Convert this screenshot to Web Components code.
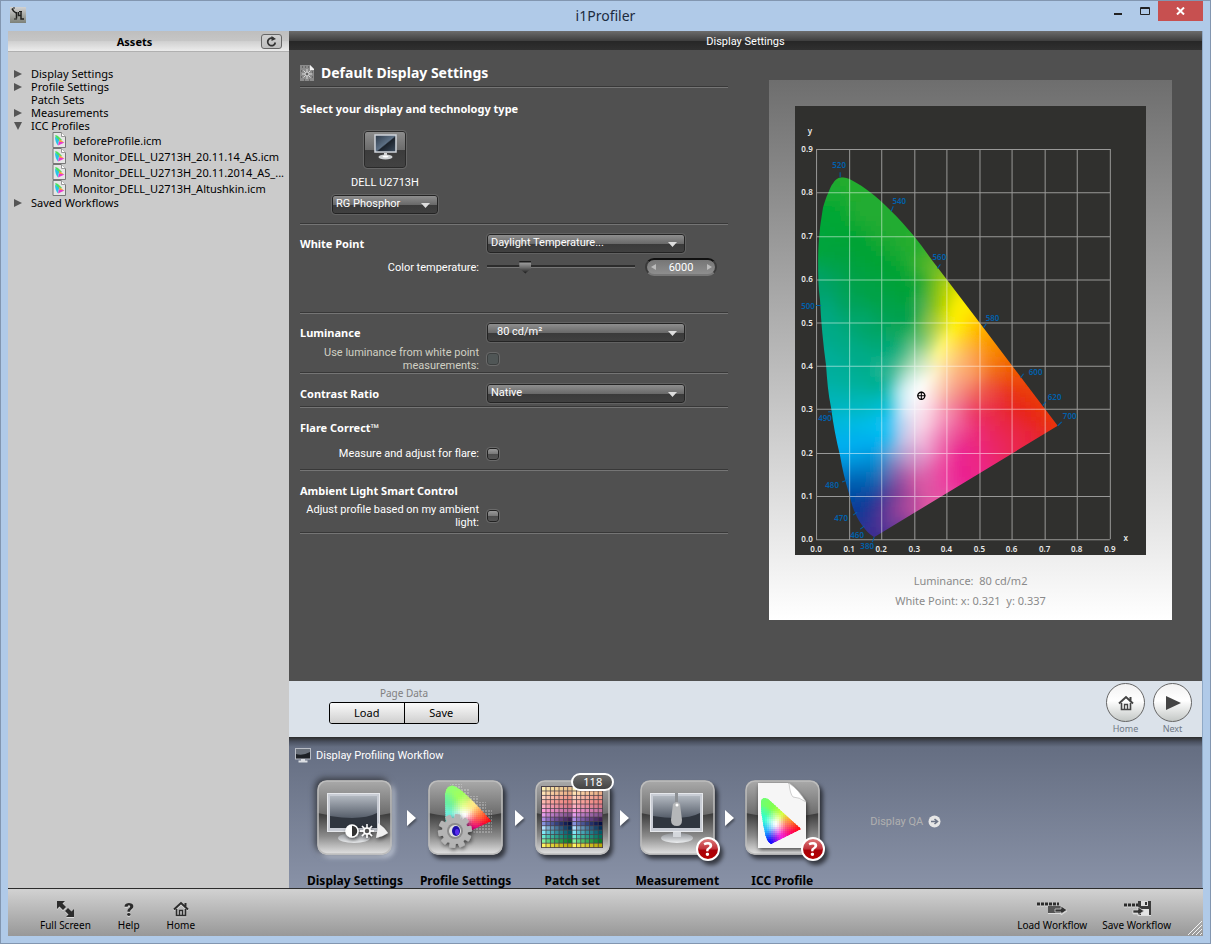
<!DOCTYPE html>
<html lang="en">
<head>
<meta charset="utf-8">
<meta name="viewport" content="width=device-width, initial-scale=1">
<title>i1Profiler</title>
<style>
  body {
    --narrow: Roboto, "Liberation Sans", sans-serif;
    --wide: "Noto Sans", "Open Sans", sans-serif;
    margin: 0;
    font-family: var(--wide);
    font-size: 11px;
    line-height: 13px;
    color: #000;
  }
</style>
</head>
<body>
<profiler-window caption="i1Profiler">
  <assets-panel slot="side">
    <asset-group label="Display Settings" state="closed"></asset-group>
    <asset-group label="Profile Settings" state="closed"></asset-group>
    <asset-group label="Patch Sets"></asset-group>
    <asset-group label="Measurements" state="closed"></asset-group>
    <asset-group label="ICC Profiles" state="open">
      <profile-file>beforeProfile.icm</profile-file>
      <profile-file>Monitor_DELL_U2713H_20.11.14_AS.icm</profile-file>
      <profile-file>Monitor_DELL_U2713H_20.11.2014_AS_...</profile-file>
      <profile-file>Monitor_DELL_U2713H_Altushkin.icm</profile-file>
    </asset-group>
    <asset-group label="Saved Workflows" state="closed"></asset-group>
  </assets-panel>

  <settings-page heading="Display Settings">
    <display-form slot="form"></display-form>
    <gamut-card slot="preview">
      <span slot="luminance">Luminance:&nbsp; 80 cd/m2</span>
      <span slot="white-point">White Point: x: 0.321&nbsp; y: 0.337</span>
    </gamut-card>
  </settings-page>
  <page-data-bar></page-data-bar>
  <workflow-strip heading="Display Profiling Workflow">
    <workflow-step icon="display" selected>Display Settings</workflow-step>
    <workflow-step icon="profile">Profile Settings</workflow-step>
    <workflow-step icon="patches" badge="118">Patch set</workflow-step>
    <workflow-step icon="measure" pending>Measurement</workflow-step>
    <workflow-step icon="icc" pending last>ICC Profile</workflow-step>
  </workflow-strip>

  <app-footer slot="footer">
    <tool-button icon="full">Full Screen</tool-button>
    <tool-button icon="help">Help</tool-button>
    <tool-button icon="home">Home</tool-button>
    <tool-button slot="end" icon="load">Load Workflow</tool-button>
    <tool-button slot="end" icon="save">Save Workflow</tool-button>
  </app-footer>
</profiler-window>

<script>
const toRgb = (hex) => [1, 3, 5].map((i) => parseInt(hex.slice(i, i + 2), 16));

// Colour at (x, y): a plane fitted through the nearby samples, channel by channel.
function colorAt(points, x, y, spread) {
  const ridge = spread * spread * 0.2;
  let total = 0, mx = 0, my = 0;
  const mean = [0, 0, 0];
  const weights = points.map((p) => {
    const w = Math.exp(-((p.x - x) ** 2 + (p.y - y) ** 2) / (2 * spread * spread)) + 1e-9;
    total += w;
    mx += w * p.x;
    my += w * p.y;
    p.rgb.forEach((c, i) => { mean[i] += w * c; });
    return w;
  });
  mx /= total;
  my /= total;
  let sxx = ridge, sxy = 0, syy = ridge;
  points.forEach((p, k) => {
    const w = weights[k] / total;
    sxx += w * (p.x - mx) ** 2;
    syy += w * (p.y - my) ** 2;
    sxy += w * (p.x - mx) * (p.y - my);
  });
  const det = sxx * syy - sxy * sxy;
  return mean.map((sum, i) => {
    const m = sum / total;
    let cx = 0, cy = 0;
    points.forEach((p, k) => {
      const w = weights[k] / total;
      cx += w * (p.x - mx) * (p.rgb[i] - m);
      cy += w * (p.y - my) * (p.rgb[i] - m);
    });
    const gx = (cx * syy - cy * sxy) / det;
    const gy = (cy * sxx - cx * sxy) / det;
    return Math.round(Math.min(255, Math.max(0, m + gx * (x - mx) + gy * (y - my))));
  });
}

// Fills a box with small cells coloured from the samples.
function colorMesh(samples, [x0, y0, x1, y1], cell, spread) {
  const points = samples.map(([x, y, hex]) => ({ x, y, rgb: toRgb(hex) }));
  let out = "";
  for (let y = y0; y < y1; y += cell) {
    for (let x = x0; x < x1; x += cell) {
      const rgb = colorAt(points, x + cell / 2, y + cell / 2, spread).join(",");
      out += `<rect x="${x}" y="${y}" width="${cell + 1}" height="${cell + 1}" fill="rgb(${rgb})"/>`;
    }
  }
  return out;
}

const HOUSE = `
  <path d="M2 9.500 L9 3 L16 9.500 M13.500 3 V6.500" fill="none" stroke="currentColor" stroke-width="2"/>
  <path d="M4.500 9 V15.500 H13.500 V9" fill="none" stroke="currentColor" stroke-width="1.600"/>
  <path d="M7.500 15 V10.500 H10.500 V15" fill="none" stroke="currentColor" stroke-width="1.300"/>`;

class ProfilerWindow extends HTMLElement {
  constructor() {
    super();
    this.attachShadow({ mode: "open" });
  }

  connectedCallback() {
    this.shadowRoot.innerHTML = `
      <style>
        :host {
          display: flex;
          flex-direction: column;
          box-sizing: border-box;
          min-height: 100vh;
          padding: 0 7px 7px;
          background: #b0cae8;
          border: 1px solid #8296b0;
        }
        header {
          display: grid;
          grid-template-columns: 1fr auto 1fr;
          height: 30px;
        }
        .logo { margin: 6px 0 0 2px; }
        h1 {
          margin: 0;
          font-size: 14px;
          font-weight: 400;
          line-height: 30px;
          color: #1c2b3f;
        }
        .buttons { display: flex; justify-content: flex-end; align-items: flex-start; }
        .buttons button {
          width: 27px;
          height: 20px;
          padding: 0;
          border: 0;
          background: none;
        }
        .buttons .close { width: 45px; background: #c75050; }
        .buttons svg { display: block; margin: auto; }
        .body {
          flex: 1;
          display: grid;
          grid-template-columns: 281px minmax(0, 1fr);
          border-right: 1px solid #8fa9c6;
        }
        .main { display: flex; flex-direction: column; }
      </style>
      <header>
        <svg class="logo" width="16" height="16" viewBox="0 0 16 16" aria-hidden="true">
          <defs><linearGradient id="g" x2="0" y2="1"><stop stop-color="#d2d2d2"/><stop offset="1" stop-color="#7c8078"/></linearGradient></defs>
          <rect width="16" height="16" fill="url(#g)"/>
          <path d="M2 1.500L3.500 4L6 6M6.500 5V11.500M8.500 5V8.500H11M11 4V12H14" stroke="#20211f" stroke-width="1.500" fill="none"/>
          <path d="M3 1H5M9 4.500H12M4 12H7" stroke="#20211f" fill="none"/>
        </svg>
        <h1>${this.getAttribute("caption")}</h1>
        <div class="buttons">
          <button aria-label="Minimize"><svg width="8" height="10" viewBox="0 0 8 10"><path d="M0 7h8v2H0z" fill="#222"/></svg></button>
          <button aria-label="Maximize"><svg width="10" height="8" viewBox="0 0 10 8"><path d="M.500 .500h9v7h-9zM0 1.500h10" fill="none" stroke="#222"/></svg></button>
          <button class="close" aria-label="Close"><svg width="9" height="8" viewBox="0 0 9 8"><path d="M1 .500L8 7.500M8 .500L1 7.500" stroke="#fff" stroke-width="2"/></svg></button>
        </div>
      </header>
      <div class="body">
        <slot name="side"></slot>
        <div class="main"><slot></slot></div>
      </div>
      <slot name="footer"></slot>
    `;
  }
}

class AssetsPanel extends HTMLElement {
  constructor() {
    super();
    this.attachShadow({ mode: "open" }).innerHTML = `
      <style>
        :host { display: block; background: #cbcbcb; }
        .bar {
          display: grid;
          grid-template-columns: 1fr auto 1fr;
          align-items: center;
          height: 20px;
          background: linear-gradient(#bebebe, #c6c6c6 48%, #d0d0d0 52%, #ececec);
          border-bottom: 1px solid #b0b0b0;
        }
        h2 { grid-column: 2; margin: 0 0 0 -28px; font-size: 11px; }
        button {
          justify-self: end;
          width: 21px;
          height: 15px;
          margin-right: 7px;
          padding: 0;
          border: 1px solid #666;
          border-radius: 3px;
          background: linear-gradient(#d0d0d0, #c0c0c0);
        }
        svg { display: block; margin: auto; }
        nav { padding-top: 15px; }
      </style>
      <div class="bar">
        <h2>Assets</h2>
        <button aria-label="Refresh">
          <svg width="11" height="11" viewBox="0 0 11 11"><path d="M8 3 A3.800 3.800 0 1 0 9.300 6.500" fill="none" stroke="#333" stroke-width="1.700"/><path d="M5.500 0 L10 3 L5.500 5z" fill="#333"/></svg>
        </button>
      </div>
      <nav><slot></slot></nav>
    `;
  }
}

class AssetGroup extends HTMLElement {
  constructor() {
    super();
    this.attachShadow({ mode: "open" });
  }

  connectedCallback() {
    const arrows = {
      closed: '<path d="M0 0 L8 4 L0 8z"/>',
      open: '<path d="M0 0 H8 L4 8z"/>',
    };
    this.shadowRoot.innerHTML = `
      <style>
        :host { display: block; }
        .row { display: flex; align-items: center; height: 13px; padding-left: 6px; }
        svg { width: 8px; height: 8px; margin-right: 9px; fill: #555; overflow: visible; }
        .files { display: flex; flex-direction: column; padding-left: 44px; }
      </style>
      <div class="row"><svg viewBox="0 0 8 8" aria-hidden="true">${arrows[this.getAttribute("state")] ?? ""}</svg>${this.getAttribute("label")}</div>
      <div class="files"><slot></slot></div>
    `;
  }
}

class ProfileFile extends HTMLElement {
  constructor() {
    super();
    this.attachShadow({ mode: "open" }).innerHTML = `
      <style>
        :host { display: flex; align-items: center; gap: 6px; height: 16px; white-space: nowrap; }
      </style>
      <svg width="15" height="16" viewBox="0 0 15 16" aria-hidden="true">
        <path d="M1 .500H9.500L13.500 4.500V15.500H1z" fill="#e6e6e6" stroke="#777"/>
        <path d="M9.500 .500V4.500H13.500" fill="#fff" stroke="#999"/>
        <path d="M3 3.500 Q5 2 10 8 L6 9z" fill="#4be060"/>
        <path d="M3 4.500 L7 8 L6 13.500 Q3 10 3 4.500" fill="#27c4e6"/>
        <path d="M7 6.500 L12 10.500 L7.500 11z" fill="#f4a33c"/>
        <path d="M7 9.500 L12.500 10.500 L6 13.500z" fill="#e838d0"/>
      </svg>
      <span><slot></slot></span>
    `;
  }
}

class SettingsPage extends HTMLElement {
  constructor() {
    super();
    this.attachShadow({ mode: "open" });
  }

  connectedCallback() {
    this.shadowRoot.innerHTML = `
      <style>
        :host { flex: 1; display: flex; flex-direction: column; background: #505050; color: #fff; }
        h2 {
          margin: 0;
          height: 19px;
          line-height: 22px;
          font-family: var(--narrow);
          font-size: 11px;
          font-weight: 400;
          text-align: center;
          background: linear-gradient(#6c6c6c, #404040 50%, #262626 51%, #303030);
        }
        .columns {
          display: grid;
          grid-template-columns: 17fr 16fr;
          align-items: start;
          gap: 41px;
          padding: 0 30px 0 11px;
        }
        .preview { padding-top: 30px; }
      </style>
      <h2>${this.getAttribute("heading")}</h2>
      <div class="columns">
        <slot name="form"></slot>
        <div class="preview"><slot name="preview"></slot></div>
      </div>
    `;
  }
}

class DisplayForm extends HTMLElement {
  constructor() {
    super();
    this.attachShadow({ mode: "open" }).innerHTML = `
      <style>
        :host { display: block; font-family: var(--narrow); }
        h3 {
          display: flex;
          align-items: center;
          gap: 6px;
          margin: 0;
          padding-top: 9px;
          height: 27px;
          font-family: var(--wide);
          font-size: 14px;
        }
        h4, .name {
          margin: 0;
          font-family: var(--wide);
          font-size: 11px;
          font-weight: 700;
          line-height: 16px;
        }
        section {
          box-sizing: border-box;
          border-top: 1px solid #383838;
          box-shadow: inset 0 1px #757575;
        }
        .end { height: 2px; }
        .display { min-height: 137px; padding-top: 14px; }
        .device { display: flex; flex-direction: column; align-items: center; width: 170px; }
        .device button {
          width: 42px;
          height: 37px;
          margin: 14px 0 8px;
          padding: 0;
          border: 1px solid #2a2a2a;
          border-radius: 3px;
          outline: 1px solid #666;
          background: linear-gradient(#8c8c8c, #6c6c6c 50%, #3c3c3c 51%, #424242);
        }
        .device .pick { margin-top: 6px; width: 106px; }
        .row {
          display: grid;
          grid-template-columns: 179px minmax(0, 1fr);
          column-gap: 8px;
          align-items: center;
        }
        .row > label:not(.name) { text-align: right; }
        .pick { position: relative; width: 198px; }
        .pick::after {
          content: "";
          position: absolute;
          top: 8px;
          right: 8px;
          width: 9px;
          height: 5px;
          background: #ddd;
          clip-path: polygon(0 0, 100% 0, 50% 100%);
          pointer-events: none;
        }
        select {
          appearance: none;
          display: block;
          box-sizing: border-box;
          width: 100%;
          height: 19px;
          padding: 0 20px 2px 3px;
          font: inherit;
          line-height: 13px;
          color: #fff;
          border: 1px solid #242424;
          border-radius: 3px;
          outline: 1px solid #626262;
          background: linear-gradient(#8e8e8e, #6a6a6a 50%, #3a3a3a 51%, #404040);
        }
        #luminance { padding-left: 9px; }
        .white { min-height: 89px; padding-top: 10px; }
        .light { min-height: 60px; padding-top: 10px; }
        .contrast { min-height: 34px; padding-top: 11px; }
        .flare, .ambient { min-height: 63px; padding-top: 13px; }
        .flare .row { margin-top: 11px; }
        .ambient .row { margin-top: 4px; }
        .light .row + .row { margin-top: 4px; }
        .temp { display: flex; align-items: center; gap: 10px; height: 28px; }
        input[type="range"] {
          appearance: none;
          width: 148px;
          height: 14px;
          margin: 0;
          background: linear-gradient(#2c2c2c, #2c2c2c) 0 5px / 100% 2px no-repeat,
            linear-gradient(#777, #777) 0 7px / 100% 1px no-repeat;
        }
        input[type="range"]::-webkit-slider-thumb {
          appearance: none;
          width: 12px;
          height: 13px;
          background: linear-gradient(#1c1c1c, #1c1c1c 1px, #999 2px, #6c6c6c 50%, #111);
          clip-path: polygon(0 0, 100% 0, 100% 60%, 50% 100%, 0 60%);
        }
        .spin {
          display: flex;
          align-items: center;
          box-sizing: border-box;
          width: 72px;
          height: 18px;
          border: 2px solid #1a1a1a;
          border-color: #111 #3a3a3a #777 #3a3a3a;
          border-radius: 9px;
          background: linear-gradient(#767676, #8e8e8e);
        }
        .spin button { width: 12px; padding: 0; border: 0; background: none; }
        .spin svg { display: block; margin: auto; fill: #bbb; }
        .spin input {
          flex: 1;
          min-width: 0;
          padding: 0;
          border: 0;
          background: none;
          font: inherit;
          color: #fff;
          text-align: center;
        }
        input[type="checkbox"] {
          appearance: none;
          box-sizing: border-box;
          width: 12px;
          height: 12px;
          margin: 0;
          border: 1px solid #222;
          border-radius: 3px;
          outline: 1px solid #6a6a6a;
          background: linear-gradient(#999, #777 50%, #4c4c4c 51%, #555);
        }
        input[type="checkbox"]:disabled { border-color: #3c3f3f; background: #505656; }
        .off { color: #d0d0c4; }
      </style>
      <h3>
        <svg width="15" height="16" viewBox="0 0 15 16" aria-hidden="true">
          <path d="M0 0H10L14 4V16H0z" fill="#8b8b8b"/>
          <path d="M10 0 L14 4 V5 H10z" fill="#f2f2f2"/>
          <path d="M7 4V14M2 9H12M3.500 5.500L10.500 12.500M10.500 5.500L3.500 12.500" stroke="#d8d8d8"/>
          <circle cx="7" cy="9" r="2" fill="#666" stroke="#d8d8d8"/>
          <path d="M2 2h1M5 2h1M8 2h1M1 6h1M12 7h1M1 12h1M12 12h1M4 15h1M9 15h1" stroke="#444"/>
        </svg>
        Default Display Settings
      </h3>
      <section class="display">
        <h4>Select your display and technology type</h4>
        <div class="device">
          <button aria-label="DELL U2713H">
            <svg width="26" height="28" viewBox="0 0 26 28">
              <defs><linearGradient id="s" x2="1" y2="1"><stop stop-color="#293544"/><stop offset=".5" stop-color="#5d7085"/><stop offset=".55" stop-color="#1b222b"/><stop offset="1" stop-color="#3e4e60"/></linearGradient></defs>
              <rect x="3" y="1" width="21" height="17" fill="url(#s)" stroke="#cfd4da" stroke-width="1.500"/>
              <path d="M12 19h3v3h-3z" fill="#d8d8d8"/>
              <ellipse cx="13.500" cy="23" rx="7" ry="2.500" fill="#cdd0d2"/><ellipse cx="13.500" cy="22.500" rx="3" ry="1" fill="#fff"/>
            </svg>
          </button>
          <label for="panel">DELL U2713H</label>
          <div class="pick"><select id="panel"><option>RG Phosphor</option></select></div>
        </div>
      </section>
      <section class="white">
        <div class="row">
          <label class="name" for="white">White Point</label>
          <div class="pick"><select id="white"><option>Daylight Temperature...</option></select></div>
        </div>
        <div class="row">
          <label for="temp">Color temperature:</label>
          <div class="temp">
            <input id="temp" type="range" min="4000" max="12000" value="5900" step="100">
            <div class="spin">
              <button aria-label="Decrease"><svg width="5" height="6"><path d="M5 0V6L0 3z"/></svg></button>
              <input aria-label="Temperature in kelvin" value="6000">
              <button aria-label="Increase"><svg width="5" height="6"><path d="M0 0V6L5 3z"/></svg></button>
            </div>
          </div>
        </div>
      </section>
      <section class="light">
        <div class="row">
          <label class="name" for="luminance">Luminance</label>
          <div class="pick"><select id="luminance"><option>80 cd/m²</option></select></div>
        </div>
        <div class="row">
          <label class="off" for="measured">Use luminance from white point measurements:</label>
          <input id="measured" type="checkbox" disabled>
        </div>
      </section>
      <section class="contrast">
        <div class="row">
          <label class="name" for="contrast">Contrast Ratio</label>
          <div class="pick"><select id="contrast"><option>Native</option></select></div>
        </div>
      </section>
      <section class="flare">
        <h4>Flare Correct™</h4>
        <div class="row">
          <label for="flare">Measure and adjust for flare:</label>
          <input id="flare" type="checkbox">
        </div>
      </section>
      <section class="ambient">
        <h4>Ambient Light Smart Control</h4>
        <div class="row">
          <label for="ambient">Adjust profile based on my ambient light:</label>
          <input id="ambient" type="checkbox">
        </div>
      </section>
      <section class="end"></section>
    `;
  }
}

class GamutCard extends HTMLElement {
  static LOCUS = "M48 71 C54 72 62 76 75 86 C86 94 104 112 118 129 C127 140 135 152 143 162 L184 216 L262 319 L79 430 C75 428 71 424 69 421 C65 416 62 411 60 406 C57 400 56 394 54 387 C50 374 47 361 45 349 C41 333 38 317 36 301 C33 287 32 273 31 259 C28 237 26 216 25 194 C23 180 23 167 23 154 C23 142 24 131 25 121 C26 114 27 107 28 101 C30 95 31 91 33 87 C35 82 36 79 38 77 C41 72 44 71 48 71z";

  static SAMPLES = [
    [48, 76, "#22ac2e"], [65, 107, "#22ac30"], [98, 121, "#22ac30"], [112, 151, "#22ac30"], [118, 137, "#26ad2e"],
    [85, 100, "#22ac30"], [85, 130, "#1eaa32"], [38, 90, "#16aa32"],
    [38, 107, "#00a734"], [65, 137, "#00a334"], [98, 164, "#00a335"], [112, 187, "#00a23a"], [30, 137, "#00a43c"],
    [50, 122, "#04a634"], [82, 150, "#04a434"], [48, 150, "#00a23e"], [80, 185, "#00a246"], [52, 195, "#00a35c"],
    [42, 171, "#00a256"], [32, 181, "#00a268"], [65, 177, "#00a246"], [98, 211, "#00a250"], [35, 204, "#00a67c"],
    [32, 224, "#00aa88"], [65, 217, "#00a66c"], [92, 241, "#00a978"], [38, 254, "#00ad98"], [105, 227, "#1aa95e"],
    [50, 235, "#00aa84"], [65, 250, "#00ab88"], [80, 222, "#00a564"],
    [112, 211, "#00a04c"], [105, 245, "#30b080"],
    [122, 177, "#1aa636"], [132, 164, "#54b52c"], [142, 171, "#7fc020"], [128, 197, "#52b052"], [145, 197, "#a2cc00"],
    [135, 217, "#98c64a"], [122, 231, "#5fbc70"], [118, 243, "#88cc98"], [112, 258, "#90d0a0"], [125, 258, "#cfe8c8"],
    [158, 204, "#fff000"], [162, 194, "#f8ec00"], [155, 184, "#c8d800"], [162, 224, "#ffef00"], [168, 206, "#ffee00"],
    [175, 217, "#ffd200"], [152, 231, "#fff25a"],
    [145, 247, "#fff68c"], [158, 251, "#fed27a"], [178, 251, "#fca35a"], [168, 234, "#ffc83a"], [185, 227, "#ffac00"],
    [198, 241, "#f88c00"], [192, 254, "#f98718"], [212, 257, "#f26a00"], [138, 267, "#fffad8"], [126, 284, "#ffffff"],
    [126, 276, "#ffffff"], [118, 288, "#ffffff"], [115, 267, "#c4e8dc"], [112, 294, "#e0f4fc"],
    [122, 297, "#fdf0f6"], [108, 281, "#d8eef0"], [98, 267, "#55bfa0"], [102, 288, "#a0e2ee"], [92, 312, "#10c0f4"],
    [108, 307, "#d6e4f6"], [99, 318, "#90ccf4"], [82, 277, "#00b090"], [58, 274, "#00b09a"], [35, 271, "#00b0a0"],
    [90, 280, "#10b4a8"], [38, 294, "#00b4b8"],
    [65, 297, "#00b8bc"], [88, 296, "#00bcc8"], [45, 317, "#00b8dc"], [78, 321, "#00bdec"], [90, 326, "#00c0f4"],
    [62, 318, "#00bae4"], [62, 337, "#00aef0"],
    [45, 337, "#00aff0"], [78, 337, "#00adee"], [52, 347, "#00a8e8"], [52, 364, "#007fcc"], [78, 357, "#0088d0"],
    [65, 355, "#0092d8"], [66, 370, "#006cba"],
    [58, 377, "#005cae"], [75, 377, "#0060b0"], [65, 397, "#0b409a"], [78, 391, "#20409c"], [65, 411, "#1f3796"],
    [78, 421, "#3d2f92"], [82, 401, "#3e2f90"], [92, 407, "#673a97"], [98, 401, "#8a4099"], [88, 371, "#4a6ab0"],
    [98, 344, "#80b0e0"], [108, 331, "#c8c8ea"], [105, 367, "#9a60aa"], [102, 384, "#7f3f97"], [115, 354, "#cc90c4"],
    [92, 388, "#5a4098"], [97, 356, "#7c84c0"], [108, 346, "#b8a4d4"],
    [115, 391, "#b04a9c"], [125, 334, "#f2bcdc"], [132, 317, "#f9cce0"], [132, 344, "#eaa0d0"], [128, 361, "#dc78b8"],
    [122, 374, "#d455a2"], [132, 391, "#dd55a2"], [135, 297, "#fcdce4"], [165, 317, "#f05c98"], [145, 330, "#f080b8"],
    [122, 317, "#f6dcec"], [145, 310, "#f6a4c4"], [145, 345, "#ee68ac"],
    [145, 384, "#e650a3"], [145, 361, "#ec4aa0"], [158, 334, "#ea4f98"], [165, 344, "#eb2490"], [165, 364, "#eb2490"],
    [152, 374, "#ec3aa0"], [152, 304, "#f48cac"], [155, 291, "#f49a90"], [145, 284, "#fbd0bc"], [158, 271, "#fcb48c"],
    [165, 300, "#f07090"], [168, 262, "#fcae70"], [145, 265, "#fde0b4"],
    [178, 267, "#f99c64"], [182, 291, "#ee5a58"], [170, 280, "#f58c78"], [178, 307, "#eb3468"], [182, 327, "#eb2a78"],
    [182, 351, "#ec2684"], [198, 327, "#ea2860"], [205, 304, "#e8283c"], [212, 287, "#e83024"], [198, 267, "#f06820"],
    [192, 310, "#ea2c54"], [198, 340, "#ea2868"], [210, 318, "#e92848"],
    [212, 264, "#f05a04"], [195, 282, "#ee5040"], [198, 294, "#ea3c44"], [222, 272, "#ee4c08"],
    [225, 287, "#e8380c"], [215, 334, "#ea2850"], [232, 307, "#e8241c"], [255, 317, "#e83010"], [232, 327, "#e8243c"],
    [245, 301, "#ea360a"], [220, 300, "#e82820"],
  ];

  // wavelength, label position, tick on the locus
  static WAVES = [
    [520, 44, 62, 45, 66, 45, 71], [540, 104, 98, 98, 100, 96, 105], [560, 144, 154, 145, 158, 142, 162],
    [580, 197, 214, 191, 217, 188, 221], [600, 240, 268, 228, 267, 225, 271], [620, 259, 293, 250, 295, 247, 299],
    [700, 274, 312, 266, 315, 262, 319], [500, 13, 202, 21, 199, 26, 199], [490, 30, 314, 33, 305, 37, 305],
    [480, 37, 381, 47, 375, 52, 373], [470, 46, 414, 58, 408, 62, 405], [460, 62, 431, 65, 422, 69, 419],
    [380, 72, 442, 77, 435, 79, 430],
  ];

  constructor() {
    super();
    const ticks = [...Array(10).keys()];
    const gx = (i) => 21 + Math.round(i * 32.5);
    const gy = (i) => 432 - Math.round(i * 43.2);
    const grid = ticks.map((i) => `M${gx(i)}.5 43V432M21 ${gy(i)}.5H314`).join("");
    const axis = ticks.map((i) => `
      <text x="${gx(i)}" y="445">0.${i}</text>
      <text x="12" y="${gy(i) + 3}">0.${i}</text>`).join("");
    const waves = GamutCard.WAVES.map(([nm, x, y, x1, y1, x2, y2]) => `
      <text x="${x}" y="${y}">${nm}</text><path d="M${x1} ${y1}L${x2} ${y2}"/>`).join("");

    this.attachShadow({ mode: "open" }).innerHTML = `
      <style>
        :host {
          display: block;
          padding: 26px 26px 9px;
          background: linear-gradient(#6e6e6e, #fff);
          color: #8a8a8a;
          text-align: center;
        }
        svg { display: block; width: 100%; margin-bottom: 16px; background: #30302e; }
        p { margin: 0; line-height: 20px; }
        .axis { fill: #e8e8e8; font-size: 8px; font-weight: 600; text-anchor: middle; }
        .waves { fill: #0060ac; stroke: none; font-size: 8px; font-weight: 600; text-anchor: middle; }
        .waves path { stroke: #0060ac; }
      </style>
      <svg viewBox="0 0 350 448" role="img" aria-label="Chromaticity diagram">
        <defs>
          <clipPath id="locus"><path d="${GamutCard.LOCUS}"/></clipPath>
          <filter id="soft" x="0" y="0" width="1" height="1"><feGaussianBlur stdDeviation="2.500"/></filter>
        </defs>
        <g clip-path="url(#locus)"><g filter="url(#soft)">${colorMesh(GamutCard.SAMPLES, [5, 55, 280, 445], 5, 8)}</g></g>
        <path d="${grid}" fill="none" stroke="#fff" stroke-opacity=".5"/>
        <g class="axis">${axis}<text x="15" y="28">y</text><text x="330" y="434">x</text></g>
        <g class="waves">${waves}</g>
        <g fill="none" stroke="#000"><circle cx="126" cy="289" r="3.500" stroke-width="1.300"/><path d="M122 289h8M126 285v8"/></g>
      </svg>
      <p><slot name="luminance"></slot></p>
      <p><slot name="white-point"></slot></p>
    `;
  }
}

class PageDataBar extends HTMLElement {
  constructor() {
    super();
    this.attachShadow({ mode: "open" }).innerHTML = `
      <style>
        :host {
          display: flex;
          justify-content: space-between;
          height: 56px;
          padding: 0 10px 0 40px;
          background: #dbe2ea;
          color: #808080;
        }
        .data { width: 150px; padding-top: 6px; font-size: 10px; text-align: center; }
        .pair {
          display: flex;
          box-sizing: border-box;
          height: 22px;
          margin-top: 2px;
          border: 1px solid #000;
          border-radius: 3px;
          overflow: hidden;
        }
        .pair button {
          flex: 1;
          padding: 0 0 1px;
          border: 0;
          font: inherit;
          font-size: 11px;
          color: #000;
          background: linear-gradient(#fafafa, #cfcfcf);
        }
        .pair button + button { border-left: 1px solid #000; }
        .nav { display: flex; align-items: flex-start; gap: 8px; padding-top: 2px; }
        .nav button {
          padding: 0;
          border: 0;
          background: none;
          font: inherit;
          font-size: 9px;
          color: #707884;
        }
        .disc {
          display: grid;
          place-items: center;
          box-sizing: border-box;
          width: 39px;
          height: 39px;
          border: 1px solid #666;
          border-radius: 50%;
          background: linear-gradient(#f2f2f2, #fff 45%, #c4c8c6);
          color: #444;
        }
      </style>
      <div class="data">
        Page Data
        <div class="pair"><button>Load</button><button>Save</button></div>
      </div>
      <div class="nav">
        <button><span class="disc"><svg width="18" height="18" viewBox="0 0 18 18">${HOUSE}</svg></span>Home</button>
        <button><span class="disc"><svg width="16" height="16" viewBox="0 0 16 16"><path d="M1 1L16 8L1 15z" fill="currentColor"/></svg></span>Next</button>
      </div>
    `;
  }
}

class WorkflowStrip extends HTMLElement {
  constructor() {
    super();
    this.attachShadow({ mode: "open" });
  }

  connectedCallback() {
    this.shadowRoot.innerHTML = `
      <style>
        :host {
          display: block;
          box-sizing: border-box;
          height: 151px;
          padding: 10px 0 0 6px;
          overflow: hidden;
          background: linear-gradient(#2c2c2c, #4b5261 5px, #656e82 10px, #8992a7);
          color: #fff;
        }
        h2, a { font-family: var(--narrow); font-size: 11px; font-weight: 400; }
        h2 { display: flex; align-items: center; gap: 5px; height: 16px; margin: 0 0 17px; }
        .steps { display: flex; padding-left: 12px; }
        a {
          display: flex;
          align-items: center;
          align-self: flex-start;
          gap: 5px;
          height: 82px;
          margin-left: 44px;
          color: #b0b0b0;
          text-decoration: none;
        }
      </style>
      <h2>
        <svg width="16" height="15" viewBox="0 0 16 15" aria-hidden="true">
          <rect x=".5" y=".5" width="15" height="10.500" fill="#1d2126" stroke="#b8bcc4"/>
          <path d="M1 1H15V4Q8 8 1 6z" fill="#69707a"/>
          <path d="M6 11h4v1.500h2.500v2h-9v-2H6z" fill="#dcdfe4"/>
        </svg>
        ${this.getAttribute("heading")}
      </h2>
      <div class="steps">
        <slot></slot>
        <a href="#qa">Display QA
          <svg width="13" height="13" viewBox="0 0 13 13" aria-hidden="true"><circle cx="6.500" cy="6.500" r="6" fill="#e6e6e6"/><path d="M3 6.500h6M6.500 4L9.500 6.500L6.500 9" fill="none" stroke="#6c7486" stroke-width="1.600"/></svg>
        </a>
      </div>
    `;
  }
}

const MONITOR = `
  <ellipse cx="37" cy="58" rx="16" ry="5" fill="url(#chrome)"/>
  <path d="M33 50h8v7h-8z" fill="#d4d7dc"/>
  <rect x="10" y="13" width="53" height="39" fill="#c9cdd5"/>
  <rect x="10.500" y="13.500" width="52" height="38" fill="none" stroke="#e6e8ec"/>
  <rect x="13" y="16" width="47" height="32" fill="#30363f"/>
  <path d="M13 16H60V33Q45 41 13 36z" fill="url(#glass)"/>`;

function gear(cx, cy) {
  const teeth = [...Array(10).keys()]
    .map((i) => `<rect x="${cx - 3}" y="${cy - 17}" width="6" height="8" rx="1" transform="rotate(${i * 36 + 10} ${cx} ${cy})"/>`)
    .join("");
  return `<g fill="#b4b4b4">${teeth}<circle cx="${cx}" cy="${cy}" r="13"/></g>
    <circle cx="${cx}" cy="${cy}" r="8" fill="#8c8c8c"/><circle cx="${cx}" cy="${cy}" r="6" fill="#dedede"/>
    <ellipse cx="${cx + 1}" cy="${cy}" rx="4" ry="5" fill="#1c10a8"/><ellipse cx="${cx + 2}" cy="${cy + 1}" rx="2" ry="3" fill="#5a2cf0"/>`;
}

function patchGrid() {
  const rows = [
    ["#fff0b4", "#e8c08c"], ["#ffe2b4", "#ecb088"], ["#ffd4c0", "#f09888"], ["#ffb8b0", "#ec8480"], ["#ffb0c4", "#d87888"],
    ["#ffa0dc", "#c070a0"], ["#e49cec", "#80508c"], ["#b08ce8", "#402058"], ["#8490dc", "#041044"], ["#b0e0ff", "#023058"],
    ["#80e8f8", "#025868"], ["#68e8d4", "#00705c"], ["#84f0a0", "#0a7c28"], ["#fff460", "#b8a808"],
  ];
  let out = "";
  rows.forEach(([from, to], r) => {
    const a = toRgb(from);
    const b = toRgb(to);
    for (let c = 0; c < 14; c++) {
      const t = ((c % 7) / 6) ** 0.7;
      const rgb = a.map((v, i) => Math.round(v + (b[i] - v) * t)).join(",");
      out += `<rect x="${7 + c * 4.35}" y="${7 + r * 4.35}" width="3.600" height="3.600" fill="rgb(${rgb})"/>`;
    }
  });
  return `<rect x="6" y="6" width="62" height="62" fill="#4a4048"/>${out}`;
}

const STEP_ICONS = {
  display: () => `${MONITOR}
    <g filter="url(#lift)">
      <circle cx="35" cy="51" r="6" fill="#333" stroke="#fff" stroke-width="1.500"/><path d="M35 45A6 6 0 0 0 35 57z" fill="#fff"/>
      <path d="M50 44V58M43 51H57M45 46L55 56M55 46L45 56" stroke="#fff" stroke-width="1.500"/>
      <circle cx="50" cy="51" r="3" fill="#555" stroke="#fff" stroke-width="1.500"/>
      <path d="M61 43Q67 47 71 53Q65 57 59 58Q61 50 61 43z" fill="#f0f0f0"/>
    </g>`,
  profile: () => `
    <path d="M22 4H34V8H42V16H50V22H58V30H64V54H46" fill="url(#dots)"/>
    <g clip-path="url(#fan)">${colorMesh([
      [22, 8, "#90ff70"], [22, 24, "#6cf0a0"], [19, 34, "#70f0e0"], [30, 18, "#a0ff60"], [36, 26, "#e8ff90"],
      [38, 34, "#ffffff"], [44, 28, "#ffe890"], [52, 36, "#ff7040"], [62, 41, "#ff0010"], [46, 42, "#ff4060"], [46, 48, "#e00080"],
    ], [14, 3, 66, 60], 2, 4)}</g>
    <g filter="url(#lift)">${gear(27, 51)}</g>`,
  patches: patchGrid,
  measure: () => `${MONITOR}
    <path d="M35 13h3v10h-3z" fill="#8d9094"/>
    <path d="M33 24Q37 20 40 24L42 40Q42 46 37 46Q31 46 31 40z" fill="#b5b7b9"/><circle cx="37" cy="25" r="1.500" fill="#fff"/>`,
  icc: () => `
    <path d="M13 3H43Q57 16 61 22V68H13z" fill="#f6f6f6" filter="url(#lift)"/>
    <path d="M44 3Q45 14 48 17Q54 17 61 22Q54 10 44 3" fill="#fff" stroke="#bbb" stroke-width=".7"/>
    <g clip-path="url(#shark)">${colorMesh([
      [18, 20, "#70ff70"], [28, 26, "#80ff50"], [18, 40, "#30ffd0"], [20, 50, "#20b8ff"], [25, 62, "#1010ff"], [31, 44, "#ffffff"],
      [38, 34, "#d8ff40"], [44, 40, "#ffa030"], [54, 48, "#ff1010"], [44, 52, "#ff1070"], [36, 57, "#f020e0"], [42, 44, "#ff7060"],
    ], [14, 15, 60, 68], 2, 4)}</g>`,
};

class WorkflowStep extends HTMLElement {
  constructor() {
    super();
    this.attachShadow({ mode: "open" });
  }

  connectedCallback() {
    const badge = this.getAttribute("badge");
    const arrow = '<svg class="next" width="9" height="16" viewBox="0 0 9 16" aria-hidden="true"><path d="M0 0L9 8L0 16z" fill="#fff"/></svg>';
    const pending = `<g><circle cx="68" cy="69" r="11" fill="url(#alert)" stroke="#fff" stroke-width="2"/>
      <text x="68" y="76" text-anchor="middle" font-size="19" font-weight="700" fill="#fff">?</text></g>`;
    this.shadowRoot.innerHTML = `
      <style>
        :host { display: flex; font-size: 12px; font-weight: 700; color: #000; }
        button {
          position: relative;
          display: flex;
          flex-direction: column;
          align-items: center;
          min-width: 88px;
          padding: 0;
          border: 0;
          background: none;
          font: inherit;
          line-height: 18px;
          color: inherit;
          white-space: nowrap;
        }
        .tile { margin-bottom: 17px; overflow: visible; filter: drop-shadow(3px 4px 2px #0009); }
        :host([selected]) .tile { filter: drop-shadow(-2px -2px 3px #0009) drop-shadow(3px 3px 2px #b4bccc); }
        .next { margin: 30px 4px 0; filter: drop-shadow(1px 2px 1px #0006); }
        .count {
          position: absolute;
          top: -7px;
          right: 2px;
          box-sizing: border-box;
          width: 43px;
          height: 18px;
          border: 2px solid #fff;
          border-radius: 9px;
          background: linear-gradient(#6c6c6c, #444);
          color: #fff;
          font-size: 11px;
          font-weight: 400;
          line-height: 14px;
        }
      </style>
      <button>
        <svg class="tile" width="75" height="75" viewBox="0 0 75 75" aria-hidden="true">
          <defs>
            <linearGradient id="base" x2="0" y2="1"><stop stop-color="#3a3a3a"/><stop offset=".45" stop-color="#3c3c3c"/><stop offset=".75" stop-color="#8a8a8a"/><stop offset="1" stop-color="#e4e4e4"/></linearGradient>
            <linearGradient id="gloss" x2="0" y2="1"><stop stop-color="#aaa"/><stop offset="1" stop-color="#686868"/></linearGradient>
            <linearGradient id="glass" x2="0" y2="1"><stop stop-color="#b2b8c0"/><stop offset="1" stop-color="#565e6a"/></linearGradient>
            <linearGradient id="chrome" x2="0" y2="1"><stop stop-color="#8c8f94"/><stop offset="1" stop-color="#eef0f2"/></linearGradient>
            <linearGradient id="alert" x2="0" y2="1"><stop stop-color="#e08080"/><stop offset=".5" stop-color="#c03038"/><stop offset=".55" stop-color="#a80008"/><stop offset="1" stop-color="#b80000"/></linearGradient>
            <pattern id="dots" width="3" height="3" patternUnits="userSpaceOnUse"><rect width="2" height="2" fill="#fff" opacity=".25"/></pattern>
            <filter id="lift" x="-.3" y="-.3" width="1.600" height="1.600"><feDropShadow dx="1" dy="2" stdDeviation="2" flood-opacity=".6"/></filter>
            <clipPath id="fan"><path d="M17 14Q19 4 26 6Q36 10 63 41L44 50L18 50Q17 26 17 14"/></clipPath>
            <clipPath id="shark"><path d="M16 22Q17 16 23 19L56 49L26 64Q21 62 19 48Q16 34 16 22"/></clipPath>
          </defs>
          <rect x=".5" y=".5" width="74" height="74" rx="9" fill="url(#base)"/>
          <path d="M.500 10Q.500 .500 10 .500H65Q74.500 .500 74.500 10V33Q37 41 .500 33z" fill="url(#gloss)"/>
          <rect x="1" y="1" width="73" height="73" rx="9" fill="none" stroke="#bdbdbd" stroke-width="1.500"/>
          ${STEP_ICONS[this.getAttribute("icon")]()}
          ${this.hasAttribute("pending") ? pending : ""}
        </svg>
        ${badge ? `<span class="count">${badge}</span>` : ""}
        <slot></slot>
      </button>
      ${this.hasAttribute("last") ? "" : arrow}
    `;
  }
}

class AppFooter extends HTMLElement {
  constructor() {
    super();
    this.attachShadow({ mode: "open" }).innerHTML = `
      <style>
        :host {
          display: flex;
          justify-content: space-between;
          height: 47px;
          border-top: 1px solid #2c2c2c;
          background: linear-gradient(#d2d2d2, #989898);
        }
        .start { display: flex; gap: 27px; padding-left: 32px; }
        .right { display: flex; }
        .end { display: flex; gap: 15px; }
        .grip { align-self: flex-end; margin: 0 1px 1px 5px; }
      </style>
      <div class="start"><slot></slot></div>
      <div class="right">
        <div class="end"><slot name="end"></slot></div>
        <svg class="grip" width="26" height="14" viewBox="0 0 26 14" aria-hidden="true"><path d="M12 14L26 0M16 14L26 4M20 14L26 8M24 14L26 12" stroke="#f4f4f4"/></svg>
      </div>
    `;
  }
}

const TOOL_ICONS = {
  full: '<path d="M7 1H15L12.500 3.500L16 7L13 10L9.500 6.500L7 9z M24 17H16L18.500 14.500L15 11L18 8L21.500 11.500L24 9z" fill="#2c2c2c"/>',
  help: '<text x="15" y="16" text-anchor="middle" font-size="19" font-weight="900" fill="#2c2c2c">?</text>',
  home: `<g transform="translate(6 0)" color="#2c2c2c">${HOUSE}</g>`,
  load: '<path d="M0 4H22" stroke="#2c2c2c" stroke-width="3" stroke-dasharray="3 1"/><path d="M11 6H24V13H11z" fill="#555"/><path d="M18 9H24V6L30 10L24 14V12H18z" fill="#333" stroke="#ddd" stroke-width=".7"/>',
  save: '<path d="M2 5H17" stroke="#2c2c2c" stroke-width="3" stroke-dasharray="3 1"/><path d="M16 1H29V15H16z" fill="#3c3c3c"/><path d="M19 1H26V6H19z" fill="#ddd"/><path d="M23 2H25V5H23z" fill="#333"/><path d="M19 9H27V15H19z" fill="#e4e4e4"/><path d="M11 10H16V7L22 11L16 15V13H11z" fill="#333" stroke="#ddd" stroke-width=".7"/>',
};

class ToolButton extends HTMLElement {
  constructor() {
    super();
    this.attachShadow({ mode: "open" });
  }

  connectedCallback() {
    this.shadowRoot.innerHTML = `
      <style>
        :host { display: block; }
        button {
          display: flex;
          flex-direction: column;
          align-items: center;
          padding: 11px 0 0;
          border: 0;
          background: none;
          font: inherit;
          font-size: 10px;
          color: #000;
        }
        svg { margin: 0 -5px 1px; overflow: visible; font-family: var(--narrow); filter: drop-shadow(0 1px 0 #ddd); }
      </style>
      <button>
        <svg width="30" height="18" viewBox="0 0 30 18" aria-hidden="true">${TOOL_ICONS[this.getAttribute("icon")]}</svg>
        <slot></slot>
      </button>
    `;
  }
}

customElements.define("profiler-window", ProfilerWindow);
customElements.define("assets-panel", AssetsPanel);
customElements.define("asset-group", AssetGroup);
customElements.define("profile-file", ProfileFile);
customElements.define("settings-page", SettingsPage);
customElements.define("display-form", DisplayForm);
customElements.define("gamut-card", GamutCard);
customElements.define("page-data-bar", PageDataBar);
customElements.define("workflow-strip", WorkflowStrip);
customElements.define("workflow-step", WorkflowStep);
customElements.define("app-footer", AppFooter);
customElements.define("tool-button", ToolButton);
</script>
</body>
</html>
